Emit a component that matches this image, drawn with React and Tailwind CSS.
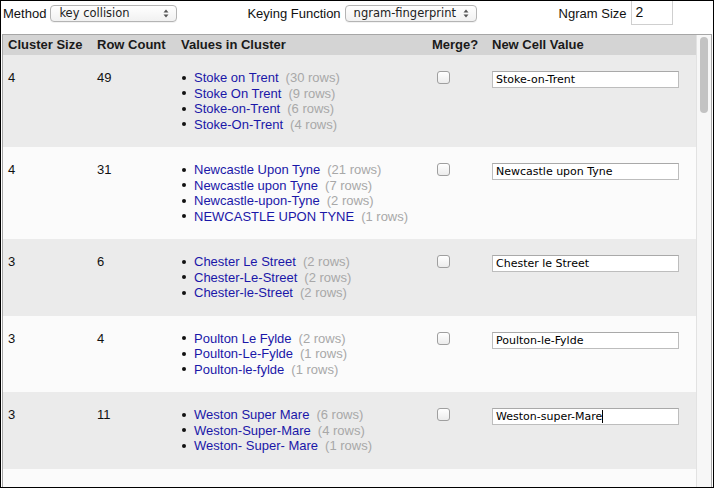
import React from 'react';

const clusters = [
  {
    size: 4,
    count: 49,
    values: [
      ['Stoke on Trent', 30],
      ['Stoke On Trent', 9],
      ['Stoke-on-Trent', 6],
      ['Stoke-On-Trent', 4],
    ],
    newValue: 'Stoke-on-Trent',
  },
  {
    size: 4,
    count: 31,
    values: [
      ['Newcastle Upon Tyne', 21],
      ['Newcastle upon Tyne', 7],
      ['Newcastle-upon-Tyne', 2],
      ['NEWCASTLE UPON TYNE', 1],
    ],
    newValue: 'Newcastle upon Tyne',
  },
  {
    size: 3,
    count: 6,
    values: [
      ['Chester Le Street', 2],
      ['Chester-Le-Street', 2],
      ['Chester-le-Street', 2],
    ],
    newValue: 'Chester le Street',
  },
  {
    size: 3,
    count: 4,
    values: [
      ['Poulton Le Fylde', 2],
      ['Poulton-Le-Fylde', 1],
      ['Poulton-le-fylde', 1],
    ],
    newValue: 'Poulton-le-Fylde',
  },
  {
    size: 3,
    count: 11,
    values: [
      ['Weston Super Mare', 6],
      ['Weston-Super-Mare', 4],
      ['Weston- Super- Mare', 1],
    ],
    newValue: 'Weston-super-Mare',
    editing: true,
  },
];

const cols = 'grid grid-cols-[89px_84px_251px_60px_209px]';

function Arrows() {
  return (
    <svg width="6" height="9" viewBox="0 0 6 9" className="shrink-0">
      <path d="M3 0.5 L5.5 3.5 H0.5 Z" fill="#555" />
      <path d="M3 8.5 L5.5 5.5 H0.5 Z" fill="#555" />
    </svg>
  );
}

function Select({ value, width }) {
  return (
    <div
      className={`${width} mt-[4px] h-[17px] flex items-center justify-between pl-[8px] pr-[7px] rounded-[4px] border border-[#b4b4b4] bg-gradient-to-b from-white to-[#f1f1f1] shadow-[0_1px_0_rgba(0,0,0,0.05)] font-['DejaVu_Sans',sans-serif] text-[11.5px] text-[#222]`}
    >
      <span className="leading-[15px]">{value}</span>
      <Arrows />
    </div>
  );
}

function Checkbox() {
  return (
    <div className="mt-[1px] ml-[10px] w-[13px] h-[13px] rounded-[3px] border border-[#9f9f9f] bg-gradient-to-b from-white to-[#ececec]" />
  );
}

function CellInput({ value, editing }) {
  return (
    <div className="mt-[1px] w-[187px] h-[17px] flex items-center pl-[3px] border border-[#bdbdbd] border-t-[#a9a9a9] bg-white font-['DejaVu_Sans',sans-serif] text-[11px] text-black">
      <span className="leading-[15px] whitespace-pre">{value}</span>
      {editing && <span className="w-px h-[13px] bg-black" />}
    </div>
  );
}

function ClusterRow({ cluster, index }) {
  const bg = index % 2 === 0 ? 'bg-[#ebebeb]' : 'bg-[#fbfbfb]';
  return (
    <div className={`${cols} ${bg} py-[15px] leading-[15.5px] text-[13px] text-[#111]`}>
      <div className="pl-[5px]">{cluster.size}</div>
      <div className="pl-[5px]">{cluster.count}</div>
      <ul className="pl-[6px]">
        {cluster.values.map(([name, rows]) => (
          <li key={name} className="flex items-center">
            <span className="w-[4px] h-[4px] rounded-full bg-[#111] mr-[8px]" />
            <span className="text-[#1a17a8] whitespace-pre">{name}</span>
            <span className="ml-[7px] text-[#a8a8a8]">({rows} rows)</span>
          </li>
        ))}
      </ul>
      <div>
        <Checkbox />
      </div>
      <div className="pl-[5px]">
        <CellInput value={cluster.newValue} editing={cluster.editing} />
      </div>
    </div>
  );
}

export default function App() {
  return (
    <div className="w-[714px] h-[488px] border border-black bg-white overflow-hidden flex flex-col font-['Liberation_Sans',Arial,sans-serif] text-[13px] text-[#111]">
      {/* controls */}
      <div className="h-[33px] shrink-0 flex items-start">
        <span className="ml-[2px] mt-[5px] leading-[16px]">Method</span>
        <div className="ml-[4px]">
          <Select value="key collision" width="w-[127px]" />
        </div>
        <span className="ml-[70px] mt-[5px] leading-[16px]">Keying Function</span>
        <div className="ml-[4px]">
          <Select value="ngram-fingerprint" width="w-[132px]" />
        </div>
        <span className="ml-[82px] mt-[5px] leading-[16px]">Ngram Size</span>
        <div className="ml-[4px] -mt-px w-[42px] h-[25px] border border-[#cfcfcf] pl-[4px] leading-[23px] text-[14px]">2</div>
      </div>

      {/* cluster table */}
      <div className="flex-1 mx-[1px] border-t border-x border-[#a6a6a6] flex overflow-hidden">
        <div className="w-[693px] bg-[#fbfbfb]">
          <div className={`${cols} h-[20px] items-center bg-[#d4d4d4] font-bold text-[13px] text-[#1a1a1a]`}>
            <div className="pl-[5px]">Cluster Size</div>
            <div className="pl-[5px]">Row Count</div>
            <div className="pl-[5px]">Values in Cluster</div>
            <div className="pl-[5px]">Merge?</div>
            <div className="pl-[5px]">New Cell Value</div>
          </div>
          {clusters.map((c, i) => (
            <ClusterRow key={c.newValue} cluster={c} index={i} />
          ))}
        </div>
        <div className="w-[15px] border-l border-[#e2e2e2] bg-[#f7f7f7]">
          <div className="mt-[2px] ml-[3px] w-[8px] h-[76px] rounded-full bg-[#c3c3c3]" />
        </div>
      </div>
    </div>
  );
}
